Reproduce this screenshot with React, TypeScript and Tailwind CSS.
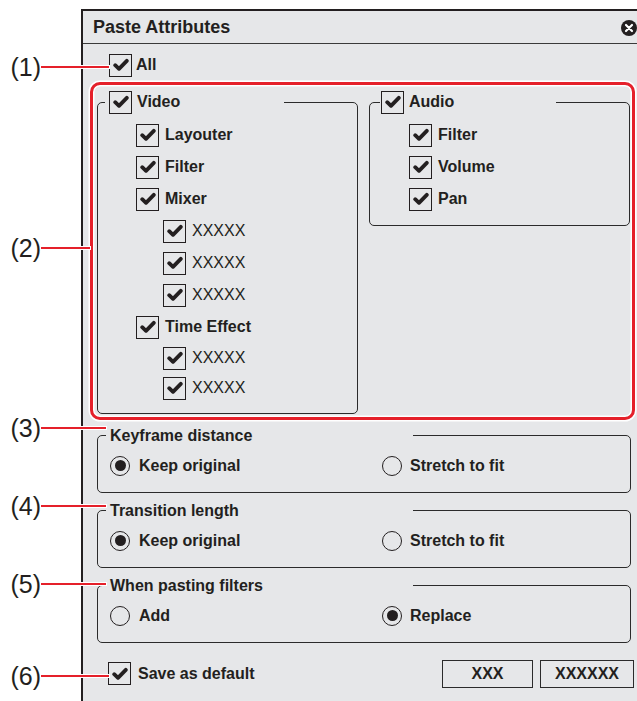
import React from 'react'

const font = 'font-["Liberation_Sans",Arial,sans-serif]'

function Check() {
  return (
    <span className="flex h-[23px] w-[23px] shrink-0 items-center justify-center border-[1.5px] border-[#231f20]">
      <svg width="16" height="14" viewBox="0 0 16 14">
        <path d="M2.2 7.2 L6 10.8 L13.8 2.8" fill="none" stroke="#231f20" strokeWidth="3.8" strokeLinecap="round" strokeLinejoin="round" />
      </svg>
    </span>
  )
}

function Radio({ on }: { on?: boolean }) {
  return (
    <span className="flex h-[20px] w-[20px] shrink-0 items-center justify-center rounded-full border-[1.5px] border-[#231f20]">
      {on && <span className="h-[11px] w-[11px] rounded-full bg-[#231f20]" />}
    </span>
  )
}

function CheckRow({ label, bold = true, pad, h = 'h-8' }: { label: string; bold?: boolean; pad: string; h?: string }) {
  return (
    <div className={`flex items-center gap-[6px] ${h} ${pad}`}>
      <Check />
      <span className={`text-[16px] leading-[18px] ${bold ? 'font-bold' : 'font-normal'}`}>{label}</span>
    </div>
  )
}

function RadioGroup({ title, left, right, sel, mt }: { title: string; left: string; right: string; sel: 0 | 1; mt: string }) {
  return (
    <fieldset className={`ml-[7px] w-[534px] rounded-[5px] border-[1.5px] border-[#2b2b2b] ${mt}`}>
      <legend className="ml-[8px] w-[307px] pl-[4px] text-[16px] font-bold leading-[18px]">{title}</legend>
      <div className="mb-[15px] mt-[10px] flex h-[22px] items-center pl-[12px]">
        <div className="flex w-[272px] items-center gap-[9px]">
          <Radio on={sel === 0} />
          <span className="text-[16px] font-bold">{left}</span>
        </div>
        <div className="flex items-center gap-[8px]">
          <Radio on={sel === 1} />
          <span className="text-[16px] font-bold">{right}</span>
        </div>
      </div>
    </fieldset>
  )
}

function Callout({ n, top, w }: { n: number; top: string; w: string }) {
  return (
    <div className={`absolute left-0 flex items-center ${top}`}>
      <span className="w-[41px] text-right text-[25px] leading-[28px] text-[#231f20]">({n})</span>
      <span className={`h-[2px] bg-[#e5202a] shadow-[0_0_0_1px_#fff] ${w}`} />
    </div>
  )
}

export default function App() {
  return (
    <div className={`relative h-[701px] w-[637px] overflow-hidden bg-white text-[#231f20] ${font}`}>
      <div className="ml-[81px] mt-[9px] h-[720px] w-[562px] border-l-2 border-t-2 border-[#231f20] bg-[#e6e7e9]">
        {/* title bar */}
        <div className="flex h-[32.5px] items-center justify-between border-b-[1.5px] border-[#3a3a3a] pl-[10px] pr-[6px] pt-[2px]">
          <span className="text-[18px] font-bold">Paste Attributes</span>
          <svg width="16" height="16" viewBox="0 0 16 16">
            <circle cx="8" cy="8" r="8" fill="#231f20" />
            <path d="M5 5 L11 11 M11 5 L5 11" stroke="#fff" strokeWidth="2.2" strokeLinecap="round" />
          </svg>
        </div>

        <div className="pl-[7px] pt-[10px]">
          <div className="ml-[19px] flex h-[23px] items-center gap-[4px]">
            <Check />
            <span className="text-[16px] font-bold">All</span>
          </div>

          {/* video / audio */}
          <div className="mt-[5.5px] grid w-[545px] grid-cols-2 items-start gap-[11px] rounded-[10px] border-[3px] border-[#e5202a] pb-[2.5px] pl-[4px] pr-[2px] pt-[5px] shadow-[0_0_0_1.5px_#fff,inset_0_0_0_1.5px_#fff]">
            <fieldset className="rounded-[5px] border-[1.5px] border-[#2b2b2b]">
              <legend className="ml-[7px] flex w-[179px] items-center gap-[5px] pl-[4px]">
                <Check />
                <span className="text-[16px] font-bold">Video</span>
              </legend>
              <div className="pb-[10px] pt-[5px]">
                <CheckRow label="Layouter" pad="pl-[38px]" />
                <CheckRow label="Filter" pad="pl-[38px]" />
                <CheckRow label="Mixer" pad="pl-[38px]" />
                <CheckRow label="XXXXX" bold={false} pad="pl-[65px]" />
                <CheckRow label="XXXXX" bold={false} pad="pl-[65px]" />
                <CheckRow label="XXXXX" bold={false} pad="pl-[65px]" />
                <CheckRow label="Time Effect" pad="pl-[38px]" />
                <CheckRow label="XXXXX" bold={false} pad="pl-[65px]" h="h-[30px]" />
                <CheckRow label="XXXXX" bold={false} pad="pl-[65px]" h="h-[30px]" />
              </div>
            </fieldset>
            <fieldset className="rounded-[5px] border-[1.5px] border-[#2b2b2b]">
              <legend className="ml-[10px] flex w-[176px] items-center gap-[5px] pl-[1px]">
                <Check />
                <span className="text-[16px] font-bold">Audio</span>
              </legend>
              <div className="pb-[10px] pt-[5px]">
                <CheckRow label="Filter" pad="pl-[39px]" />
                <CheckRow label="Volume" pad="pl-[39px]" />
                <CheckRow label="Pan" pad="pl-[39px]" />
              </div>
            </fieldset>
          </div>

          <RadioGroup title="Keyframe distance" left="Keep original" right="Stretch to fit" sel={0} mt="mt-[7px]" />
          <RadioGroup title="Transition length" left="Keep original" right="Stretch to fit" sel={0} mt="mt-[9px]" />
          <RadioGroup title="When pasting filters" left="Add" right="Replace" sel={1} mt="mt-[9px]" />

          <div className="mt-[17px] flex h-[28px] w-[545px] items-center pr-[1px]">
            <div className="ml-[18px] flex items-center gap-[7px]">
              <Check />
              <span className="text-[16px] font-bold">Save as default</span>
            </div>
            <div className="ml-auto flex gap-[7px]">
              <button className="h-[28px] w-[91px] border-[1.5px] border-[#2b2b2b] text-[16px] font-bold">XXX</button>
              <button className="h-[28px] w-[94px] border-[1.5px] border-[#2b2b2b] text-[16px] font-bold">XXXXXX</button>
            </div>
          </div>
        </div>
      </div>

      <Callout n={1} top="top-[52.5px]" w="w-[68px]" />
      <Callout n={2} top="top-[234px]" w="w-[49px]" />
      <Callout n={3} top="top-[414px]" w="w-[65px]" />
      <Callout n={4} top="top-[492px]" w="w-[65px]" />
      <Callout n={5} top="top-[570px]" w="w-[65px]" />
      <Callout n={6} top="top-[662px]" w="w-[68px]" />
    </div>
  )
}
